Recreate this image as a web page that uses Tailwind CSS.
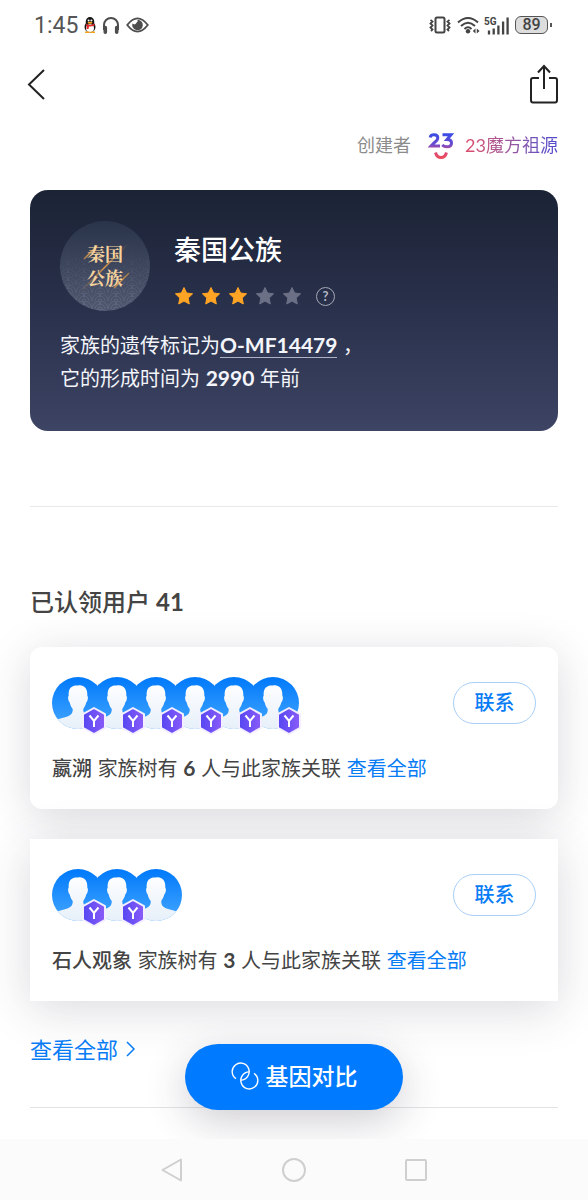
<!DOCTYPE html>
<html lang="zh-CN">
<head>
<meta charset="utf-8">
<meta name="viewport" content="width=device-width, initial-scale=1">
<title>秦国公族</title>
<script src="https://cdn.jsdelivr.net/npm/@tailwindcss/browser@4"></script>
</head>
<body class="relative flex min-h-screen flex-col bg-white font-['Lato','Noto_Sans_CJK_SC',sans-serif] text-[#444]">
<svg class="absolute h-0 w-0" aria-hidden="true">
  <defs>
    <linearGradient id="sky" x1="0" y1="0" x2="0" y2="1"><stop offset="0" stop-color="#0079fb"/><stop offset="1" stop-color="#45a7ff"/></linearGradient>
    <linearGradient id="bust" x1="0" y1="0" x2="0" y2="1"><stop offset="0" stop-color="#fdfeff"/><stop offset="1" stop-color="#e6eff9"/></linearGradient>
    <linearGradient id="hex" x1="0" y1="0" x2="1" y2="0"><stop offset="0" stop-color="#5547f2"/><stop offset="1" stop-color="#8a5cf8"/></linearGradient>
    <clipPath id="round"><circle cx="26" cy="26" r="26"/></clipPath>
    <symbol id="person" viewBox="0 0 52 52">
      <g clip-path="url(#round)">
        <rect width="52" height="52" fill="url(#sky)"/>
        <path d="M26 8.500C32 7.500 35.800 11.500 35.300 19C36.500 19.500 35.800 24 34.300 25.500C33.500 29 32 30.500 31.300 32C31 37 34 38.500 38 40C43 41.500 48 41.500 52 47V53H0V47C4 41.500 9 41.500 14 40C18 38.500 21 37 20.700 32C19.500 30.500 18.500 29 17.700 25.500C16.200 24 15.500 19.500 16.700 19C16 11 20 8 26 8.500Z" fill="url(#bust)"/>
      </g>
    </symbol>
    <symbol id="badge" viewBox="0 0 28 30">
      <path d="M14 2L25 8.200V21.800L14 28L3 21.800V8.200Z" fill="url(#hex)" stroke="#f3efff" stroke-width="2" stroke-linejoin="round"/>
      <path d="M9.500 9.500L14 15L18.500 9.500M14 15V21" fill="none" stroke="#fff" stroke-width="2"/>
    </symbol>
    <symbol id="star" viewBox="0 0 20 20"><path d="M10 1.500L12.600 7L18.600 7.800L14.200 12L15.300 18L10 15.100L4.700 18L5.800 12L1.400 7.800L7.400 7Z" fill="currentColor" stroke="currentColor" stroke-linejoin="round"/></symbol>
  </defs>
</svg>

<div class="flex h-[50px] items-center justify-between pl-[34px] pr-9">
  <div class="flex items-center gap-1">
    <span class="w-11 font-['Roboto'] text-[23px] leading-none text-[#555]">1:45</span>
    <svg class="h-4 w-4" viewBox="0 0 16 16"><ellipse cx="8" cy="10" rx="5.500" ry="5.500" fill="#151515"/><ellipse cx="8" cy="5" rx="4.300" ry="5" fill="#151515"/><ellipse cx="8" cy="11.200" rx="4" ry="3.900" fill="#fff"/><circle cx="6.600" cy="3.500" r="1" fill="#fff"/><circle cx="9.400" cy="3.500" r="1" fill="#fff"/><ellipse cx="8" cy="5.800" rx="2.500" ry="1" fill="#f6a11a"/><path d="M3.500 6.500Q8 9.300 12.500 6.500V8.500Q10 9.800 7 9.500L6.500 12H4.500L4.800 9Z" fill="#e62a2a"/><path d="M3 15.200H7.500M8.500 15.200H13" stroke="#f6a11a" stroke-width="1.500"/></svg>
    <svg class="h-[18px] w-[18px]" viewBox="0 0 18 18" fill="none" stroke="#4d4d4d"><path d="M2 14V9A7 7 0 0 1 16 9V14" stroke-width="2"/><path d="M3.300 11.500V16.200M14.700 11.500V16.200" stroke-width="3.600" stroke-linecap="round"/></svg>
    <svg class="ml-0.5 h-4 w-[23px]" viewBox="0 0 23 16"><path d="M1.200 8Q11.500-5.200 21.800 8Q11.500 21.200 1.200 8Z" fill="none" stroke="#4d4d4d" stroke-width="1.800"/><path d="M11.500 2.700A5.300 5.300 0 1 1 6.400 6.600A2.800 2.800 0 0 0 10.500 5.800A2.800 2.800 0 0 0 11.500 2.700Z" fill="#4d4d4d"/></svg>
  </div>
  <div class="flex items-center">
    <svg class="h-[18px] w-[22px]" viewBox="0 0 22 18" fill="none" stroke="#444"><rect x="6.500" y="1.500" width="9" height="15" rx="1.500" stroke-width="2"/><path d="M1.500 4L3.500 5.500L1.500 7.500L3.500 9.500L1.500 11.500L3.500 13.500L2 15M20.500 4L18.500 5.500L20.500 7.500L18.500 9.500L20.500 11.500L18.500 13.500L20 15" stroke-width="1.800"/></svg>
    <svg class="ml-1.5 h-[18px] w-[23px]" viewBox="0 0 23 18" fill="none" stroke="#444" stroke-width="2"><path d="M1 6.500Q11-2.500 21 6.500M4 10Q11 3.500 18 10M7.500 13Q11 9.500 14.500 13"/><circle cx="11" cy="15.200" r="2.200" fill="#444" stroke="none"/><path d="M18.500 12.500V17.500L15.800 15ZM19.800 12.500V17.500L22.500 15Z" fill="#444" stroke="none"/></svg>
    <svg class="ml-1 h-[19px] w-[25px]" viewBox="0 0 25 19"><text x="0" y="9" font-family="Roboto" font-size="10" font-weight="700" fill="#444">5G</text><path d="M5 18.500V14.500M9.700 18.500V12.500M14.400 18.500V9.500M19.100 18.500V5.500M23.600 18.500V1.500" stroke="#444" stroke-width="2.300"/></svg>
    <div class="ml-1.5 flex h-[18px] w-[33px] items-center justify-center rounded-md border border-[#555] bg-[#ddd] font-['Roboto'] text-base font-medium leading-none text-[#444]">89</div>
    <div class="ml-0.5 h-1 w-0.5 bg-[#555]"></div>
  </div>
</div>

<header class="flex h-[68px] items-center justify-between pl-[27px] pr-7">
  <button type="button" aria-label="返回"><svg class="h-8 w-5" viewBox="0 0 20 32" fill="none" stroke="#222" stroke-width="2"><path d="M17 2L2 16.500L17 31"/></svg></button>
  <button type="button" aria-label="分享"><svg class="h-10 w-8" viewBox="0 0 32 40" fill="none" stroke="#222" stroke-width="2"><path d="M11 14H5Q3 14 3 16V36Q3 38.500 5 38.500H27Q29 38.500 29 36V16Q29 14 27 14H21M16 25V2M10 8.500L16 2L22 8.500"/></svg></button>
</header>

<main class="flex-1 px-[30px] pt-0.5">
  <div class="flex h-[50px] items-center justify-end">
    <span class="text-lg text-[#8c8c8c]">创建者</span>
    <svg class="ml-[17px] mr-[11px] mt-0.5 h-[30px] w-[26px]" viewBox="0 0 26 30" fill="none" stroke="url(#brand)">
      <defs><linearGradient id="brand" gradientUnits="userSpaceOnUse" x1="13" y1="2" x2="13" y2="28"><stop stop-color="#354ce6"/><stop offset=".45" stop-color="#6f4bce"/><stop offset=".7" stop-color="#d94c80"/><stop offset="1" stop-color="#ef4c55"/></linearGradient></defs>
      <path d="M2.200 6.500Q2.500 3.700 6 3.700Q9.800 3.700 9.800 6.700Q9.800 9 6.500 11.500L3 15H12M14.500 3.700H23L19 8.500Q23.500 8.500 23.500 12Q23.500 15.800 19 15.800Q16 15.800 14.200 14" stroke-width="3"/>
      <path d="M7.500 21.500Q8.800 26.500 13 26.500Q17.200 26.500 18.500 21.500" stroke-width="3"/>
    </svg>
    <a href="#" class="bg-linear-to-r from-[#df4a68] to-[#4e49cf] bg-clip-text text-lg text-transparent">23魔方祖源</a>
  </div>

  <section class="mt-5 h-[241px] rounded-[18px] bg-linear-to-b from-[#1b2335] via-[#2a314c] to-[#3d4464] px-[30px] pt-[31px] text-white">
    <div class="flex gap-6">
      <div class="relative h-[90px] w-[90px]">
        <svg class="h-[90px] w-[90px]" viewBox="0 0 90 90">
          <defs>
            <linearGradient id="disc" x1="0" y1="0" x2="0" y2="1"><stop stop-color="#29334a"/><stop offset="1" stop-color="#50586f"/></linearGradient>
            <linearGradient id="fade" x1="0" y1="0" x2="0" y2="1"><stop offset=".3" stop-color="#000"/><stop offset="1" stop-color="#999"/></linearGradient>
            <mask id="wavefade"><rect width="90" height="90" fill="url(#fade)"/></mask>
            <pattern id="waves" width="16" height="8" patternUnits="userSpaceOnUse"><g fill="none" stroke="#7b839b" stroke-width=".6"><path d="M0 8A8 8 0 0 1 16 8M3 8A5 5 0 0 1 13 8M6 8A2 2 0 0 1 10 8M-8 4A8 8 0 0 1 8 4M8 4A8 8 0 0 1 24 4"/></g></pattern>
            <linearGradient id="gold" x1="0" y1="1" x2="1" y2="0"><stop stop-color="#b77835" stop-opacity="0"/><stop offset=".5" stop-color="#db9a4b"/><stop offset="1" stop-color="#b77835" stop-opacity="0"/></linearGradient>
          </defs>
          <circle cx="45" cy="45" r="45" fill="url(#disc)"/><circle cx="45" cy="45" r="45" fill="url(#waves)" mask="url(#wavefade)"/>
          <path d="M21 70L68 23M54 67L69 52M24 38L37 25" stroke="url(#gold)" stroke-width="1.500"/>
        </svg>
        <p class="absolute inset-x-0 top-5 text-center font-['Noto_Serif_CJK_SC','Noto_Sans_CJK_SC',serif] text-lg font-bold leading-6 text-[#f7d39d]">秦国<br>公族</p>
      </div>
      <div>
        <h1 class="mt-[9px] text-[27px] font-medium leading-10">秦国公族</h1>
        <div class="mt-4 flex h-5 items-center gap-[7px] text-[#ffa424]">
          <svg class="h-5 w-5"><use href="#star"/></svg><svg class="h-5 w-5"><use href="#star"/></svg><svg class="h-5 w-5"><use href="#star"/></svg>
          <svg class="h-5 w-5 text-[#6b7086]"><use href="#star"/></svg><svg class="h-5 w-5 text-[#6b7086]"><use href="#star"/></svg>
          <button type="button" aria-label="说明" class="ml-[7px] flex h-[19px] w-[19px] items-center justify-center rounded-full border border-[#a5a9b8] text-[13px] font-bold leading-none text-[#b5b9c6]">?</button>
        </div>
      </div>
    </div>
    <p class="mt-[19px] font-['Inter','Noto_Sans_CJK_SC',sans-serif] text-xl leading-[33px] text-[#f3f5fa]">家族的遗传标记为<a href="#" class="border-b border-[#adb3c5] font-['Lato'] text-[21px] font-bold leading-none">O-MF14479</a> ，<br>它的形成时间为 <b class="font-['Lato'] text-[21px] leading-none">2990</b> 年前</p>
  </section>

  <hr class="mt-[75px] border-[#e8e8e8]">

  <h2 class="mt-[77px] text-2xl font-medium leading-9">已认领用户 <b>41</b></h2>

  <section class="mt-[27px] flex h-[162px] flex-col rounded-xl bg-white px-[22px] pt-[30px] shadow-[0_8px_44px_rgba(50,50,70,0.18)]">
    <div class="flex items-start justify-between">
      <div class="isolate flex">
        <div class="relative z-6 w-[39px]"><svg class="h-[52px] w-[52px]"><use href="#person"/></svg><svg class="absolute left-7 top-[29px] h-[30px] w-7"><use href="#badge"/></svg></div>
        <div class="relative z-5 w-[39px]"><svg class="h-[52px] w-[52px]"><use href="#person"/></svg><svg class="absolute left-7 top-[29px] h-[30px] w-7"><use href="#badge"/></svg></div>
        <div class="relative z-4 w-[39px]"><svg class="h-[52px] w-[52px]"><use href="#person"/></svg><svg class="absolute left-7 top-[29px] h-[30px] w-7"><use href="#badge"/></svg></div>
        <div class="relative z-3 w-[39px]"><svg class="h-[52px] w-[52px]"><use href="#person"/></svg><svg class="absolute left-7 top-[29px] h-[30px] w-7"><use href="#badge"/></svg></div>
        <div class="relative z-2 w-[39px]"><svg class="h-[52px] w-[52px]"><use href="#person"/></svg><svg class="absolute left-7 top-[29px] h-[30px] w-7"><use href="#badge"/></svg></div>
        <div class="relative z-1 w-[39px]"><svg class="h-[52px] w-[52px]"><use href="#person"/></svg><svg class="absolute left-7 top-[29px] h-[30px] w-7"><use href="#badge"/></svg></div>
      </div>
      <button type="button" class="mt-[5px] h-[42px] w-[83px] rounded-full border border-[#a9cff8] pb-0.5 text-xl font-medium text-[#087cf5]">联系</button>
    </div>
    <p class="mt-[25px] font-['Inter','Noto_Sans_CJK_SC',sans-serif] text-xl leading-[30px]"><b class="font-medium">嬴溯</b> 家族树有 <b class="font-['Lato'] text-[21px] leading-none">6</b> 人与此家族关联 <a href="#" class="text-[#087cf5]">查看全部</a></p>
  </section>

  <section class="mt-[30px] flex h-[162px] flex-col bg-white px-[22px] pt-[30px] shadow-[0_8px_44px_rgba(50,50,70,0.18)]">
    <div class="flex items-start justify-between">
      <div class="isolate flex">
        <div class="relative z-3 w-[39px]"><svg class="h-[52px] w-[52px]"><use href="#person"/></svg><svg class="absolute left-7 top-[29px] h-[30px] w-7"><use href="#badge"/></svg></div>
        <div class="relative z-2 w-[39px]"><svg class="h-[52px] w-[52px]"><use href="#person"/></svg><svg class="absolute left-7 top-[29px] h-[30px] w-7"><use href="#badge"/></svg></div>
        <div class="relative z-1 w-[39px]"><svg class="h-[52px] w-[52px]"><use href="#person"/></svg></div>
      </div>
      <button type="button" class="mt-[5px] h-[42px] w-[83px] rounded-full border border-[#a9cff8] pb-0.5 text-xl font-medium text-[#087cf5]">联系</button>
    </div>
    <p class="mt-[25px] font-['Inter','Noto_Sans_CJK_SC',sans-serif] text-xl leading-[30px]"><b class="font-medium">石人观象</b> 家族树有 <b class="font-['Lato'] text-[21px] leading-none">3</b> 人与此家族关联 <a href="#" class="text-[#087cf5]">查看全部</a></p>
  </section>

  <a href="#" class="mt-8 inline-flex h-8 items-center gap-2 text-[22px] text-[#087cf5]">查看全部<svg class="h-4 w-[10px]" viewBox="0 0 10 16" fill="none" stroke="currentColor" stroke-width="1.500"><path d="M1 1L8 8L1 15"/></svg></a>
  <hr class="mb-6 mt-[42px] border-[#e3e3e6]">
</main>

<footer class="sticky bottom-0">
  <button type="button" class="absolute bottom-[90px] left-1/2 -z-1 flex h-[66px] w-[218px] -translate-x-1/2 items-center justify-center gap-[7px] rounded-full bg-[#007aff] pb-0.5 text-[23px] font-medium text-white shadow-[0_12px_40px_rgba(60,50,70,0.24)]">
    <svg class="h-7 w-7" viewBox="0 0 28 28" fill="none" stroke="#fff" stroke-width="1.400"><path d="M5 16.700A8.500 8.500 0 1 1 9.900 18.100"/><path d="M23 11.300A8.500 8.500 0 1 1 18.100 9.900"/></svg>
    基因对比
  </button>
  <nav class="flex h-[61px] items-center justify-center gap-[98px] bg-[#fbfbfb]">
    <button type="button" aria-label="返回"><svg class="h-6 w-6" viewBox="0 0 24 24" fill="none" stroke="#cfcfcf" stroke-width="2"><path d="M21 1.500V22.500L2.500 12Z" stroke-linejoin="round"/></svg></button>
    <button type="button" aria-label="主页"><svg class="h-6 w-6" viewBox="0 0 24 24" fill="none" stroke="#cfcfcf" stroke-width="2"><circle cx="12" cy="12" r="11"/></svg></button>
    <button type="button" aria-label="最近任务"><svg class="h-6 w-6" viewBox="0 0 24 24" fill="none" stroke="#cfcfcf" stroke-width="2"><rect x="2" y="2" width="20" height="20" rx="1"/></svg></button>
  </nav>
</footer>
</body>
</html>
